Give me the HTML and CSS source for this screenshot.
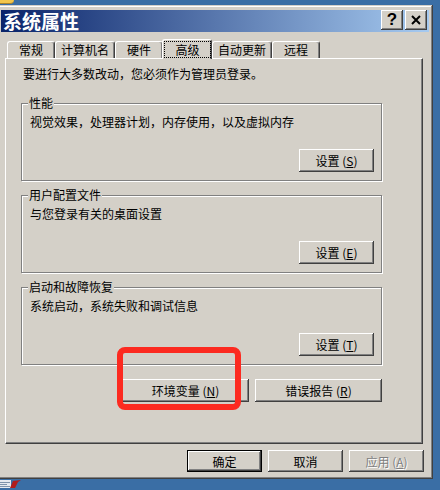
FILE: index.html
```html
<!DOCTYPE html>
<html lang="zh-CN">
<head>
  <meta charset="UTF-8" />
  <meta name="viewport" content="width=device-width, initial-scale=1.0"/>
  <title>系统属性</title>
  <link rel="stylesheet" href="styles.css">
</head>
<body>
  <!-- Desktop edge above the window -->
  <div class="desk-strip"><div class="desk-icon"></div></div>

  <!-- Dialog window -->
  <div class="window">
    <div class="titlebar">
      <span class="title">系统属性</span>
      <div class="title-buttons">
        <button class="cap-btn help">?</button>
        <button class="cap-btn close">
          <svg width="10" height="10" viewBox="0 0 10 10">
            <path d="M1 1 L9 9 M9 1 L1 9" stroke="#000" stroke-width="2" fill="none"/>
          </svg>
        </button>
      </div>
    </div>

    <!-- Tabs -->
    <div class="tabs">
      <div class="tab">常规</div>
      <div class="tab long">计算机名</div>
      <div class="tab">硬件</div>
      <div class="tab active"><span class="focus">高级</span></div>
      <div class="tab long">自动更新</div>
      <div class="tab">远程</div>
    </div>

    <div class="panel">
      <p class="intro">要进行大多数改动，您必须作为管理员登录。</p>

      <div class="group">
        <span class="group-label">性能</span>
        <p>视觉效果，处理器计划，内存使用，以及虚拟内存</p>
        <button class="btn">设置 (<u>S</u>)</button>
      </div>

      <div class="group">
        <span class="group-label">用户配置文件</span>
        <p>与您登录有关的桌面设置</p>
        <button class="btn">设置 (<u>E</u>)</button>
      </div>

      <div class="group">
        <span class="group-label">启动和故障恢复</span>
        <p>系统启动，系统失败和调试信息</p>
        <button class="btn">设置 (<u>T</u>)</button>
      </div>

      <div class="panel-actions">
        <button class="btn wide">环境变量 (<u>N</u>)</button>
        <button class="btn wide">错误报告 (<u>R</u>)</button>
      </div>
    </div>

    <!-- Dialog buttons -->
    <div class="dialog-actions">
      <button class="btn default">确定</button>
      <button class="btn">取消</button>
      <button class="btn" disabled>应用 (<u>A</u>)</button>
    </div>
  </div>

  <!-- Desktop edge below the window -->
  <div class="desk-bottom">
    <svg width="22" height="11" viewBox="0 0 22 11">
      <rect x="0" y="1" width="11" height="8" fill="#e4e9ef"/>
      <path d="M0 3.5h10M0 5.5h7M0 7.5h10" stroke="#7d93ab" stroke-width="1"/>
      <path d="M10 9 L13 2 L21 1 L18 3 L15 9 Z" fill="#b01c1c"/>
    </svg>
  </div>

  <!-- Red annotation over the button -->
  <div class="highlight"></div>
</body>
</html>
```

FILE: styles.css
```css
/* Page and desktop */
html, body {
  margin: 0;
  padding: 0;
}

body {
  position: relative;
  width: 440px;
  height: 490px;
  overflow: hidden;
  background: #3a6ea5;
  font-family: "Noto Sans CJK SC", "Liberation Sans", sans-serif;
  font-size: 12px;
  color: #000;
}

.desk-strip {
  height: 5px;
}

.desk-icon {
  box-sizing: border-box;
  width: 14px;
  height: 4px;
  background: #f2c64c;
  border-bottom: 1px solid #a8842e;
  border-radius: 0 0 7px 0;
}

.desk-bottom {
  height: 11px;
}

.desk-bottom svg {
  display: block;
}

/* Window frame */
.window {
  box-sizing: border-box;
  width: 436px;
  height: 474px;
  margin-left: -3px;
  padding: 5px 4px 4px 4px;
  background: #d4d0c8;
  box-shadow: inset -1px -1px #404040, inset 1px 1px #d4d0c8,
              inset -2px -2px #808080, inset 2px 2px #fff;
}

.titlebar {
  display: flex;
  align-items: center;
  justify-content: space-between;
  height: 22px;
  padding: 0 2px;
  background: linear-gradient(to right, #0a246a, #a6caf0);
}

.title {
  color: #fff;
  font-weight: bold;
  font-size: 19px;
  line-height: 22px;
}

.title-buttons {
  display: flex;
  gap: 2px;
  align-self: flex-start;
}

.cap-btn {
  display: flex;
  align-items: center;
  justify-content: center;
  box-sizing: border-box;
  width: 22px;
  height: 20px;
  padding: 0;
  border: none;
  background: #d4d0c8;
  box-shadow: inset -1px -1px #404040, inset 1px 1px #fff,
              inset -2px -2px #808080, inset 2px 2px #d4d0c8;
}

.help {
  font-family: "Liberation Sans", sans-serif;
  font-weight: bold;
  font-size: 17px;
  line-height: 20px;
  color: #000;
}

/* Tabs */
.tabs {
  display: flex;
  align-items: flex-end;
  height: 19px;
  padding: 7px 0 0 6px;
}

.tab {
  box-sizing: border-box;
  width: 48px;
  height: 17px;
  border: 1px solid #fff;
  border-right-color: #404040;
  border-bottom: none;
  border-radius: 3px 3px 0 0;
  box-shadow: inset -1px 0 #808080;
  text-align: center;
  line-height: 16px;
}

.tab.long {
  width: 60px;
}

.tab.active {
  position: relative;
  z-index: 1;
  width: 50px;
  height: 20px;
  margin: 0 0 -1px -1px;
  background: #d4d0c8;
}

.focus {
  display: block;
  box-sizing: border-box;
  height: 17px;
  margin: 1px 0 0 1px;
  border: 1px dotted #000;
  line-height: 15px;
}

/* Tab page */
.panel {
  box-sizing: border-box;
  width: 418px;
  height: 386px;
  margin-left: 4px;
  padding: 8px 0 0 15px;
  border: 1px solid;
  border-color: #fff #404040 #404040 #fff;
  box-shadow: inset -1px -1px #808080;
}

.intro {
  margin: 0 0 22px 2px;
  line-height: 14px;
}

.group {
  position: relative;
  box-sizing: border-box;
  display: flex;
  flex-direction: column;
  width: 361px;
  height: 78px;
  margin-bottom: 14px;
  padding: 11px 7px 0 8px;
  border: 1px solid #808080;
  box-shadow: inset 1px 1px #fff, 1px 1px #fff;
}

.group p {
  margin: 0;
  line-height: 14px;
}

.group .btn {
  align-self: flex-end;
  margin-top: 20px;
}

.group-label {
  position: absolute;
  top: -8px;
  left: 6px;
  padding: 0 1px;
  line-height: 14px;
  background: #d4d0c8;
}

.panel-actions {
  display: flex;
  justify-content: flex-end;
  gap: 6px;
  width: 361px;
}

/* Buttons */
.btn {
  box-sizing: border-box;
  width: 75px;
  height: 23px;
  padding: 0;
  border: none;
  background: #d4d0c8;
  box-shadow: inset -1px -1px #404040, inset 1px 1px #fff,
              inset -2px -2px #808080, inset 2px 2px #d4d0c8;
  font: inherit;
  color: #000;
}

.btn.wide {
  width: 127px;
}

.btn.default {
  border: 1px solid #000;
}

.btn:disabled {
  color: #808080;
  text-shadow: 1px 1px #fff;
}

.dialog-actions {
  display: flex;
  justify-content: flex-end;
  gap: 6px;
  margin-top: 6px;
  padding-right: 5px;
}

.dialog-actions .btn {
  height: 22px;
}

/* Annotation */
.highlight {
  position: absolute;
  left: 117px;
  top: 347px;
  box-sizing: border-box;
  width: 124px;
  height: 63px;
  border: 6px solid #fc2a20;
  border-radius: 8px;
}
```
